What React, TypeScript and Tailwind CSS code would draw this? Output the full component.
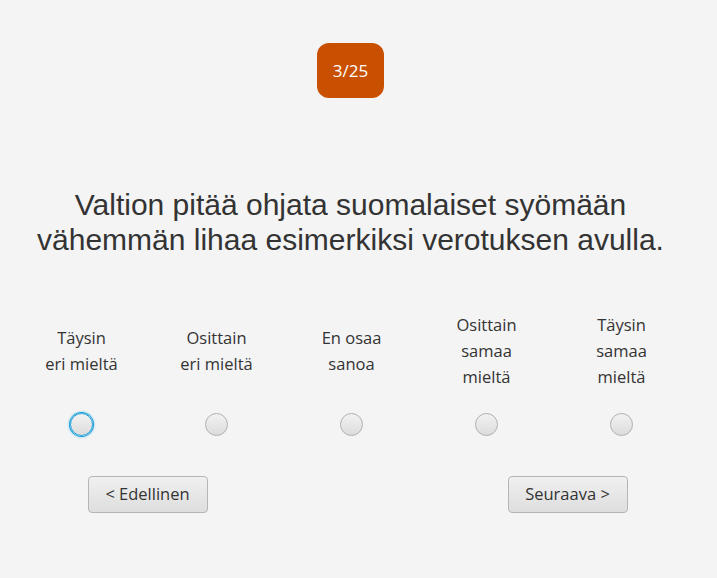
import { useState } from "react";

const options = [
  ["Täysin", "eri mieltä"],
  ["Osittain", "eri mieltä"],
  ["En osaa", "sanoa"],
  ["Osittain", "samaa", "mieltä"],
  ["Täysin", "samaa", "mieltä"],
];

export default function App() {
  const [selected, setSelected] = useState<number | null>(null);

  return (
    <div className="flex h-[578px] w-[717px] flex-col items-center bg-[#f4f4f4] font-['Open_Sans',sans-serif] text-[#333]">
      <div className="flex w-full flex-col items-center pr-[16px]">
        <div className="mt-[43px] flex h-[55px] w-[67px] items-center justify-center rounded-[12px] bg-[#c85000] text-[17px] text-white">
          3/25
        </div>

        <h1 className="mt-[89px] text-center font-['Liberation_Sans',Arial,sans-serif] text-[30px] leading-[35px] text-[#333]">
          Valtion pitää ohjata suomalaiset syömään
          <br />
          vähemmän lihaa esimerkiksi verotuksen avulla.
        </h1>

        <div className="mt-[55px] ml-[2px] grid w-[675px] grid-cols-5">
          {options.map((lines, i) => (
            <div key={i} className="flex flex-col items-center">
              <div className="flex h-[78px] flex-col justify-center text-center text-[16.5px] leading-[26px]">
                {lines.map((line) => (
                  <span key={line}>{line}</span>
                ))}
              </div>
              <button
                onClick={() => setSelected(i)}
                className={
                  "mt-[23px] flex h-[23px] w-[23px] items-center justify-center rounded-full border bg-gradient-to-b from-[#f2f2f2] to-[#dcdcdc] " +
                  (i === 0
                    ? "border-[#1ea0d8] shadow-[0_0_0_1px_#1ea0d8,0_0_3px_1px_#8fd0ee]"
                    : "border-[#b0b0b0]")
                }
              >
                {selected === i && <span className="h-[9px] w-[9px] rounded-full bg-[#333]" />}
              </button>
            </div>
          ))}
        </div>
      </div>

      <div className="mt-[40px] mr-[2px] flex gap-[300px]">
        <button className="h-[37px] w-[120px] rounded-[4px] border border-[#b5b5b5] bg-gradient-to-b from-[#f0f0f0] to-[#dedede] text-[16.5px] text-[#333]">
          &lt; Edellinen
        </button>
        <button className="h-[37px] w-[120px] rounded-[4px] border border-[#b5b5b5] bg-gradient-to-b from-[#f0f0f0] to-[#dedede] text-[16.5px] text-[#333]">
          Seuraava &gt;
        </button>
      </div>
    </div>
  );
}
